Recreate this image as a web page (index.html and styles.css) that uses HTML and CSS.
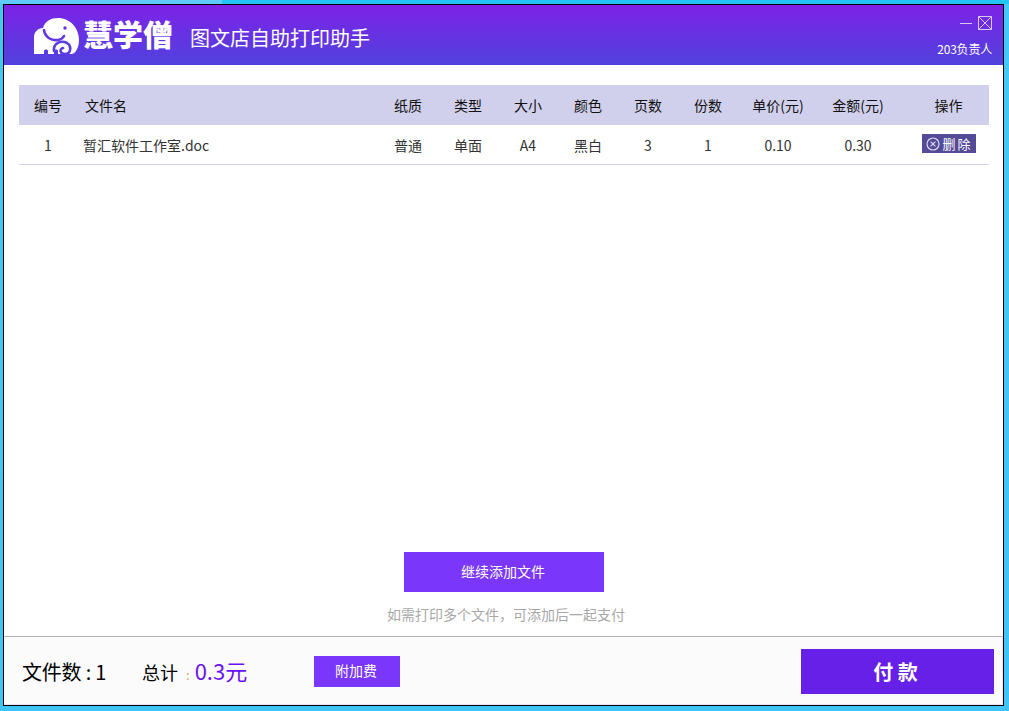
FILE: index.html
```html
<!DOCTYPE html>
<html lang="zh-CN">
<head>
<meta charset="utf-8">
<title>慧学僧 图文店自助打印助手</title>
<link rel="stylesheet" href="styles.css">
</head>
<body>
<div class="window">
  <header class="titlebar">
    <div class="brand">
      <svg class="logo" viewBox="0 0 46 38" width="46" height="38">
        <path fill="#fff" d="M0 37V20C0 15 4 11 9 11C11 4 17 1 24 1C36 1 45 11 45 23C45 30 42 36 38 37H24V34C24 32 20 32 20 34V37H14V34C14 32 10 32 10 34V37Z"/>
        <path fill="none" stroke="#6436e2" stroke-width="2.6" stroke-linecap="round" d="M10 13C11 20 17 24 24 23C27 22.500 29 21 30 19"/>
        <path fill="none" stroke="#5b3ce0" stroke-width="2.6" stroke-linecap="round" d="M20 34C19 26 27 23 33 26C38 29 37 37 31 37C26 37 25 32 29 31"/>
        <circle cx="31" cy="11" r="1.700" fill="#6a2fe4"/>
      </svg>
      <span class="brand-name">慧学僧</span>
      <span class="brand-sub">图文店自助打印助手</span>
    </div>
    <div class="win-side">
      <div class="win-controls">
        <span class="win-min"></span>
        <svg class="win-close" viewBox="0 0 14 14" width="14" height="14">
          <path fill="none" stroke="#d9c8f5" stroke-width="1" d="M.5.5h13v13H.5zM.5.5l13 13M13.5.5l-13 13"/>
        </svg>
      </div>
      <div class="win-user">203负责人</div>
    </div>
  </header>

  <main class="content">
    <div class="table">
      <div class="row row-head">
        <span>编号</span><span class="name-head">文件名</span><span>纸质</span><span>类型</span><span>大小</span><span>颜色</span><span>页数</span><span>份数</span><span>单价(元)</span><span>金额(元)</span><span class="op">操作</span>
      </div>
      <div class="row row-body">
        <span>1</span><span class="name-cell">暂汇软件工作室.doc</span><span>普通</span><span>单面</span><span>A4</span><span>黑白</span><span>3</span><span>1</span><span>0.10</span><span>0.30</span>
        <span class="op op-cell"><button class="del-btn"><svg viewBox="0 0 14 14" width="14" height="14"><circle cx="7" cy="7" r="6" fill="none" stroke="#e6e2f4" stroke-width="1.100"/><path stroke="#e6e2f4" stroke-width="1.100" d="M4.600 4.600l4.800 4.800M9.400 4.600l-4.800 4.800"/></svg><span>删除</span></button></span>
      </div>
    </div>
    <div class="add-area">
      <button class="add-btn">继续添加文件</button>
      <p class="hint">如需打印多个文件，可添加后一起支付</p>
    </div>
  </main>

  <footer class="footer">
    <div class="stats">
      <span class="count">文件数 : 1</span>
      <span class="total">总计<i class="colon">:</i><b class="amount">0.3元</b></span>
      <button class="fee-btn">附加费</button>
    </div>
    <button class="pay-btn">付 款</button>
  </footer>
</div>
</body>
</html>
```
FILE: styles.css
```css
* { box-sizing: border-box; }
html, body { margin: 0; height: 100%; }
body {
  background:
    linear-gradient(90deg, #5fcbf8 0, #5fcbf8 222px, #25c4f6 222px, #25c4f6 100%) top / 100% 4px no-repeat,
    linear-gradient(180deg, #45c8f5 0, #3fc4f5 100%);
  padding: 4px 5px 5px 3px;
  font-family: "Noto Sans CJK SC", sans-serif;
  overflow: hidden;
}
button { font-family: inherit; border: 0; padding: 0; color: #fff; }
.window {
  height: 702px;
  border: 1px solid #000;
  background: #fff;
  display: flex;
  flex-direction: column;
}
.titlebar {
  height: 60px;
  flex: none;
  background: linear-gradient(180deg, #7d22e6 0%, #5042de 100%);
  display: flex;
  justify-content: space-between;
  color: #fff;
}
.brand { display: flex; align-items: center; padding-left: 30px; }
.logo { margin-top: 2px; }
.brand-name { font-size: 30px; font-weight: 900; line-height: 36px; margin: 0 0 4px 3px; }
.brand-sub { font-size: 20px; margin: 5px 0 0 17px; }
.win-side { display: flex; flex-direction: column; align-items: flex-end; padding: 11px 11px 0 0; }
.win-controls { display: flex; align-items: center; gap: 6px; height: 14px; }
.win-min { width: 12px; height: 1px; background: #d9c8f5; margin-top: 1px; }
.win-close { display: block; }
.win-user { font-size: 12px; line-height: 16px; margin-top: 11px; letter-spacing: -.2px; }

.content { flex: 1; display: flex; flex-direction: column; padding: 20px 14px 0 15px; min-height: 0; }
.table { flex: 1; }
.row {
  display: grid;
  grid-template-columns: 58px 301px repeat(6, 60px) 80px 80px 91px;
  align-items: center;
  text-align: center;
  font-size: 14px;
}
.row-head { height: 40px; background: #d1d0ec; color: #111; padding-bottom: 1px; }
.row-body { height: 40px; border-bottom: 1px solid #d1d0ec; color: #333; }
.name-head { text-align: left; padding-left: 8px; }
.name-cell { text-align: left; padding-left: 6px; }
.op { padding-left: 10px; }
.op-cell { display: flex; justify-content: center; margin-bottom: 2px; }
.del-btn {
  width: 54px; height: 19px; background: #534a98; font-size: 13px;
  display: inline-flex; align-items: center; justify-content: center; gap: 2px;
}
.del-btn span { letter-spacing: 2px; margin-right: -2px; line-height: 19px; }

.add-area { display: flex; flex-direction: column; align-items: center; padding-bottom: 12px; }
.add-btn { width: 200px; height: 40px; background: #7a37fb; font-size: 14px; padding: 0 2px 2px 0; }
.hint { margin: 12px 0 0; padding-left: 4px; font-size: 14px; line-height: 20px; color: #a8a8a8; }

.footer {
  height: 69px;
  flex: none;
  border-top: 1px solid #b0b0b0;
  background: #fbfbfb;
  border-bottom: 1px solid #e8e4fa;
  border-right: 1px solid #e8e4fa;
  display: flex;
  align-items: center;
  justify-content: space-between;
  padding: 1px 8px 0 18px;
}
.stats { display: flex; align-items: center; }
.count { font-size: 20px; color: #000; width: 120px; letter-spacing: -.2px; }
.total { font-size: 18px; color: #000; width: 172px; white-space: nowrap; padding-bottom: 2px; }
.colon { color: #e0a060; font-size: 13px; font-style: normal; margin: 0 5px 0 8px; }
.amount { font-size: 22px; font-weight: 400; color: #6a10f5; }
.fee-btn { width: 86px; height: 31px; background: #7a37fb; font-size: 14px; padding: 0 2px 2px 0; }
.pay-btn { width: 193px; height: 45px; background: #6720e8; font-size: 20px; font-weight: 700; padding-right: 4px; }
```
